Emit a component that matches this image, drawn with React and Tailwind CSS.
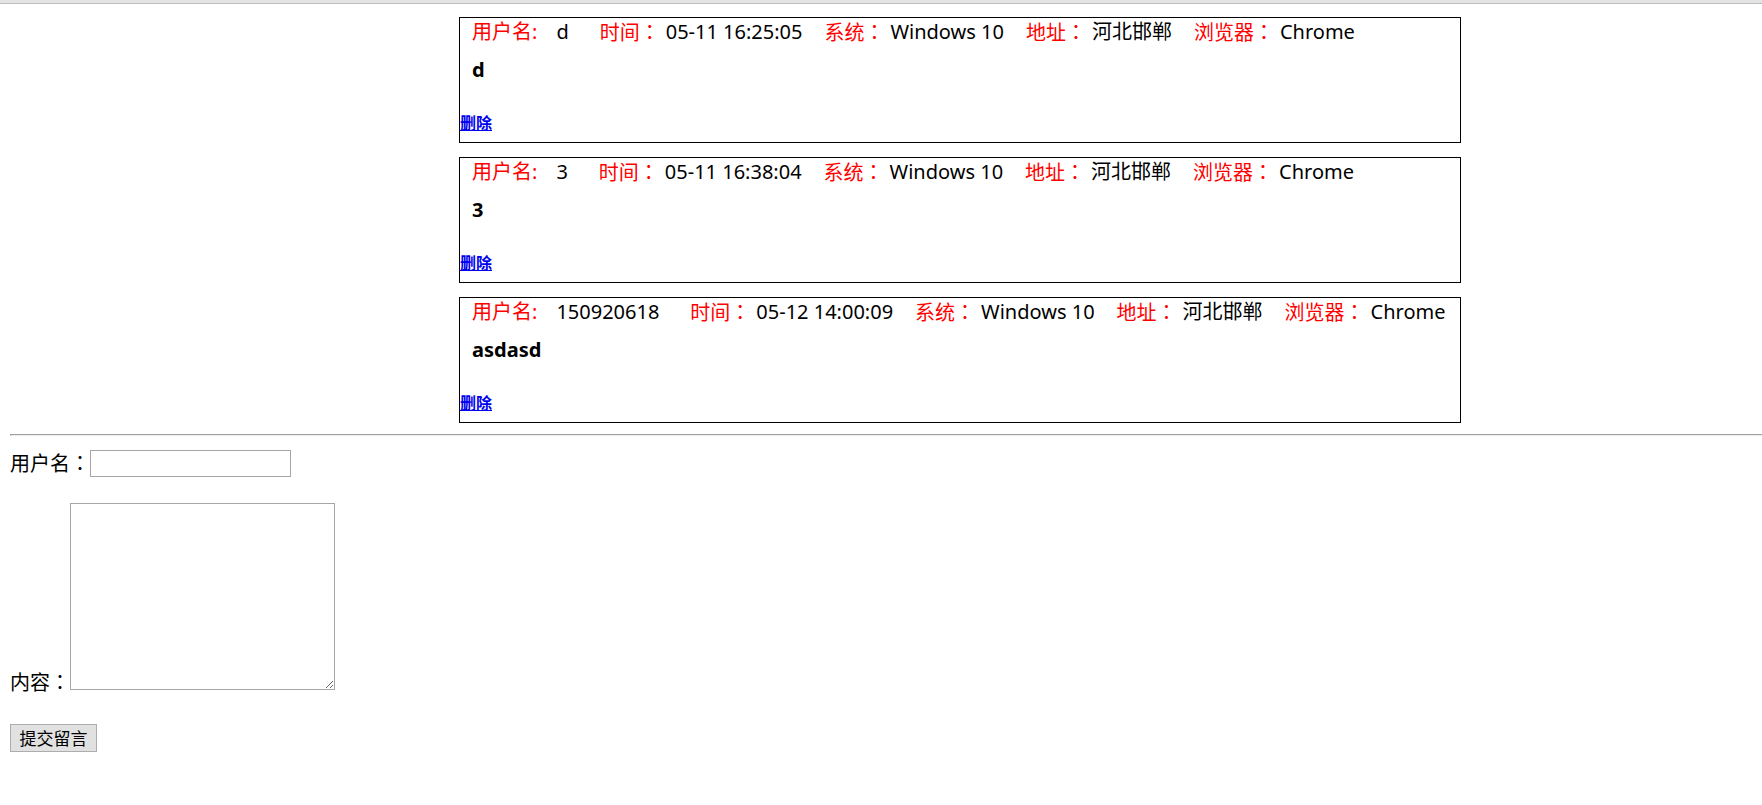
import { useState } from "react";

const messages = [
  { user: "d", time: "05-11 16:25:05", os: "Windows 10", addr: "河北邯郸", browser: "Chrome", body: "d" },
  { user: "3", time: "05-11 16:38:04", os: "Windows 10", addr: "河北邯郸", browser: "Chrome", body: "3" },
  { user: "150920618", time: "05-12 14:00:09", os: "Windows 10", addr: "河北邯郸", browser: "Chrome", body: "asdasd" },
];

// full-width colon, centred like the reference font
function Colon() {
  return <span className="font-['Noto_Sans_CJK_TC',sans-serif]">：</span>;
}

export default function App() {
  const [name, setName] = useState("");
  const [content, setContent] = useState("");

  return (
    <div className="min-h-screen bg-white text-black font-['Noto_Sans','Noto_Sans_CJK_SC',sans-serif]">
      {/* top edge */}
      <div className="h-[3px] bg-[#e3e3e3]" />
      <div className="h-[1px] bg-[#bdbdbd]" />

      {/* message list */}
      <div className="ml-[459px] pt-[13px] flex flex-col gap-[14px]">
        {messages.map((m, i) => (
          <MessageCard key={i} m={m} />
        ))}
      </div>

      <div className="ml-[10px] mt-[11px] h-[2px] border-t border-l border-t-[#a0a0a0] border-l-[#a0a0a0] border-b border-b-[#ececec]" />

      {/* form */}
      <div className="ml-[10px] mt-[14px] flex items-center">
        <span className="text-[20px] leading-[24px]">
          用户名<Colon />
        </span>
        <input
          value={name}
          onChange={(e) => setName(e.target.value)}
          className="w-[201px] h-[27px] border border-[#a6a6a6] px-[2px] text-[16px] outline-none"
        />
      </div>

      <div className="ml-[10px] mt-[26px] flex items-end">
        <span className="text-[20px] leading-[14px]">
          内容<Colon />
        </span>
        <textarea
          value={content}
          onChange={(e) => setContent(e.target.value)}
          className="w-[265px] h-[187px] border border-[#a6a6a6] p-[2px] text-[16px] outline-none resize"
        />
      </div>

      <button
        type="button"
        className="ml-[10px] mt-[34px] w-[87px] h-[28px] bg-[#e1e1e1] border border-[#adadad] text-[17px] leading-[20px] font-['Noto_Sans_CJK_SC',sans-serif]"
      >
        提交留言
      </button>
    </div>
  );
}

function MessageCard({ m }) {
  return (
    <div className="w-[1002px] h-[126px] border border-black">
      {/* meta row */}
      <div className="pl-[12px] h-[28px] flex items-center text-[20px] leading-[28px] whitespace-nowrap">
        <span className="text-[#ff0000]">用户名:</span>
        <span className="ml-[19px] mr-[31px]">{m.user}</span>
        <span className="text-[#ff0000]">时间<Colon /></span>
        <span className="ml-[6px] mr-[22px]">{m.time}</span>
        <span className="text-[#ff0000]">系统<Colon /></span>
        <span className="ml-[6px] mr-[22px]">{m.os}</span>
        <span className="text-[#ff0000]">地址<Colon /></span>
        <span className="ml-[6px] mr-[22px]">{m.addr}</span>
        <span className="text-[#ff0000]">浏览器<Colon /></span>
        <span className="ml-[6px]">{m.browser}</span>
      </div>

      {/* body */}
      <div className="pl-[12px] mt-[10px] h-[28px] text-[20px] leading-[28px] font-bold">
        {m.body}
      </div>

      <a
        href="#"
        className="block w-fit mt-[26px] text-[16px] leading-[24px] text-[#0000ee] underline font-bold font-['Noto_Sans_CJK_SC',sans-serif]"
      >
        删除
      </a>
    </div>
  );
}
